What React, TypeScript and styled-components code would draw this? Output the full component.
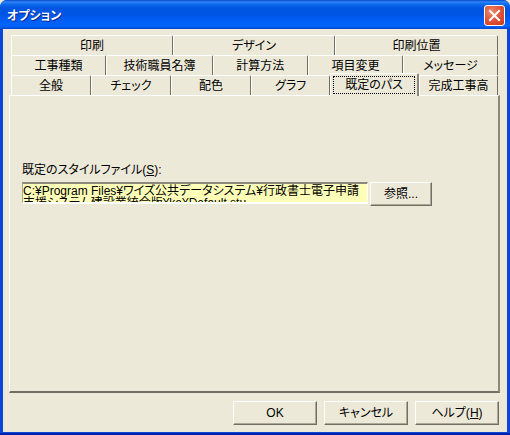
import React from "react";
import styled, { createGlobalStyle, css } from "styled-components";

const GlobalStyle = createGlobalStyle`
  * { box-sizing: border-box; }
  body { margin: 0; background: #ece9d8; }
  body, button, textarea {
    font-family: "Liberation Sans", "Noto Sans CJK JP", sans-serif;
    font-size: 12px;
    line-height: 16px;
    font-feature-settings: "palt";
    color: #000;
  }
`;

const Window = styled.main`
  min-height: 100vh;
  display: flex;
  flex-direction: column;
  background: #0a46dc;
  border-bottom: 2px solid #0020a8;
  border-radius: 7px 7px 0 0;
  overflow: hidden;
`;

const TitleBar = styled.header`
  height: 29px;
  display: flex;
  align-items: center;
  justify-content: space-between;
  padding: 2px 5px 0 7px;
  background: linear-gradient(
    to bottom,
    #0847c8 0,
    #2e85f5 2px,
    #0f6cf0 4px,
    #0055e0 8px,
    #0054e3 14px,
    #005cf5 20px,
    #0066ff 26px,
    #0046d0 29px
  );
`;

const Title = styled.h1`
  margin: 0;
  color: #fff;
  font-size: 12px;
  line-height: 16px;
  font-weight: 700;
  text-shadow: 1px 1px 0 #0a2a90;
`;

const CloseButton = styled.button`
  width: 21px;
  height: 21px;
  padding: 0;
  display: grid;
  place-items: center;
  border: 1px solid #fff;
  border-radius: 3px;
  background: radial-gradient(circle at 35% 30%, #ec8a6c 0, #e0533a 50%, #c93a16 100%);
`;

const Body = styled.div`
  flex: 1;
  display: flex;
  flex-direction: column;
  margin: 0 3px 1px;
  padding: 6px 7px 7px 6px;
  background: #ece9d8;
`;

const TabRows = styled.div`
  padding: 0 2px;
`;

const TabRow = styled.div`
  display: flex;
  height: 20px;
`;

const Tab = styled.button<{ $grow: number; $active?: boolean }>`
  flex: ${(p) => p.$grow} 1 0;
  min-width: 0;
  padding: 1px 0 0;
  display: flex;
  align-items: center;
  justify-content: center;
  white-space: nowrap;
  background: #ece9d8;
  border: 0 solid;
  border-top: 1px solid #fff;
  border-left: 1px solid #fff;
  border-right: 1px solid #716f64;
  border-radius: 2px 2px 0 0;
  ${(p) =>
    p.$active &&
    css`
      position: relative;
      height: 23px;
      margin-top: -2px;
      padding: 2px;
      border-right: 2px solid #8b897b;
    `}
`;

const Focus = styled.span`
  flex: 1;
  height: 18px;
  border: 1px dotted #000;
`;

const Pane = styled.section`
  flex: 1;
  padding: 66px 12px 12px;
  border: 1px solid #fff;
  border-right: 2px solid #8b897b;
  border-bottom: 2px solid #716f64;
`;

const Label = styled.label`
  display: block;
  margin-bottom: 4px;
`;

const FieldRow = styled.div`
  display: flex;
  align-items: flex-start;
  gap: 2px;
`;

const PathBox = styled.textarea`
  flex: 0 1 346px;
  min-width: 0;
  height: 22px;
  margin: 0;
  padding: 1px 0 0;
  resize: none;
  overflow: hidden;
  line-height: 12px;
  word-break: break-all;
  background: #ffffb8;
  border: 1px solid;
  border-color: #aca899 #fff #fff #aca899;
  border-bottom-width: 2px;
  border-top: 2px solid #8b897b;
  outline: 0;
`;

const Button = styled.button<{ $width: number }>`
  width: ${(p) => p.$width}px;
  height: 24px;
  padding: 0;
  flex-shrink: 0;
  background: #ece9d8;
  border: 1px solid;
  border-color: #fff #716f64 #716f64 #fff;
  box-shadow: inset -1px -1px 0 #aca899;
`;

const Actions = styled.footer`
  display: flex;
  justify-content: flex-end;
  gap: 7px;
  padding: 8px 1px 0 0;
`;

const rows: { label: string; grow: number; active?: boolean }[][] = [
  [
    { label: "印刷", grow: 162 },
    { label: "デザイン", grow: 162 },
    { label: "印刷位置", grow: 163 },
  ],
  [
    { label: "工事種類", grow: 95 },
    { label: "技術職員名簿", grow: 107 },
    { label: "計算方法", grow: 95 },
    { label: "項目変更", grow: 95 },
    { label: "メッセージ", grow: 95 },
  ],
  [
    { label: "全般", grow: 81 },
    { label: "チェック", grow: 81 },
    { label: "配色", grow: 81 },
    { label: "グラフ", grow: 80 },
    { label: "既定のパス", grow: 85, active: true },
    { label: "完成工事高", grow: 80 },
  ],
];

const defaultPath =
  "C:¥Program Files¥ワイズ公共データシステム¥行政書士電子申請支援システム建設業統合版¥ke¥Default.stu";

export default function App() {
  return (
    <>
      <GlobalStyle />
      <Window>
        <TitleBar>
          <Title>オプション</Title>
          <CloseButton aria-label="閉じる">
            <svg width="13" height="13" viewBox="0 0 13 13" aria-hidden="true">
              <path d="M2 2 11 11M11 2 2 11" stroke="#fff" strokeWidth="2" strokeLinecap="square" />
            </svg>
          </CloseButton>
        </TitleBar>
        <Body>
          <TabRows role="tablist">
            {rows.map((row, i) => (
              <TabRow key={i} role="presentation">
                {row.map((t) => (
                  <Tab key={t.label} role="tab" aria-selected={!!t.active} $grow={t.grow} $active={t.active}>
                    {t.active ? <Focus>{t.label}</Focus> : t.label}
                  </Tab>
                ))}
              </TabRow>
            ))}
          </TabRows>
          <Pane role="tabpanel">
            <Label htmlFor="style-file">
              既定のスタイルファイル(<u>S</u>):
            </Label>
            <FieldRow>
              <PathBox id="style-file" defaultValue={defaultPath} readOnly spellCheck={false} />
              <Button $width={62}>参照...</Button>
            </FieldRow>
          </Pane>
          <Actions>
            <Button $width={84}>OK</Button>
            <Button $width={84}>キャンセル</Button>
            <Button $width={84}>
              ヘルプ(<u>H</u>)
            </Button>
          </Actions>
        </Body>
      </Window>
    </>
  );
}
